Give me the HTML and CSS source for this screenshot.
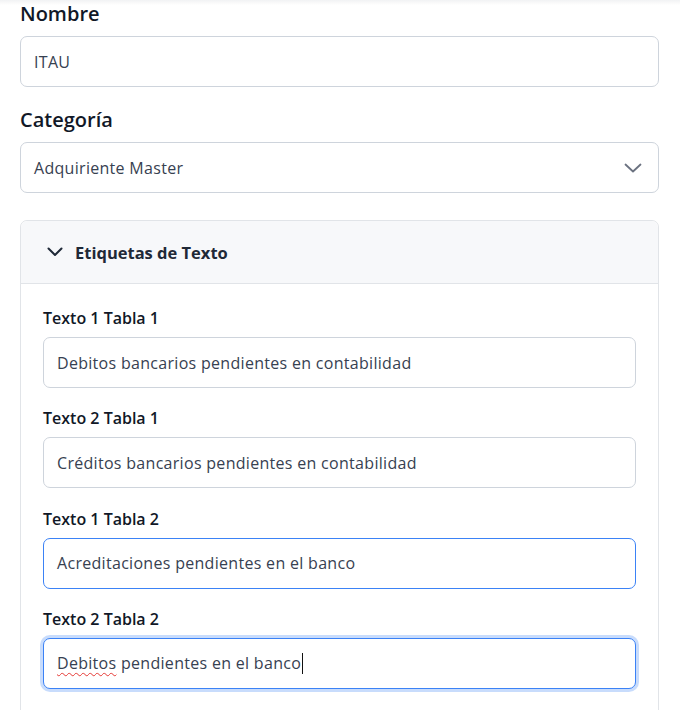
FILE: index.html
```html
<!DOCTYPE html>
<html lang="es">
<head>
<meta charset="utf-8">
<title>Formulario</title>
<link rel="stylesheet" href="styles.css">
</head>
<body>
<div class="page">
  <div class="field">
    <label class="label-lg">Nombre</label>
    <div class="control">ITAU</div>
  </div>
  <div class="field">
    <label class="label-lg">Categoría</label>
    <div class="control select">
      <span>Adquiriente Master</span>
      <svg class="select-chev" width="18" height="10" viewBox="0 0 18 10"><path d="M1.5 1.5 L9 8.5 L16.5 1.5" fill="none" stroke="#6b7280" stroke-width="1.8" stroke-linecap="round" stroke-linejoin="round"/></svg>
    </div>
  </div>
  <div class="card">
    <div class="card-head">
      <svg class="head-chev" width="16" height="10" viewBox="0 0 16 10"><path d="M1.5 1.5 L8 8 L14.5 1.5" fill="none" stroke="#1f2937" stroke-width="2" stroke-linecap="round" stroke-linejoin="round"/></svg>
      <span class="card-title">Etiquetas de Texto</span>
    </div>
    <div class="card-body">
      <div class="sub-field">
        <label class="label-sm">Texto 1 Tabla 1</label>
        <div class="control">Debitos bancarios pendientes en contabilidad</div>
      </div>
      <div class="sub-field">
        <label class="label-sm">Texto 2 Tabla 1</label>
        <div class="control">Créditos bancarios pendientes en contabilidad</div>
      </div>
      <div class="sub-field">
        <label class="label-sm">Texto 1 Tabla 2</label>
        <div class="control active">Acreditaciones pendientes en el banco</div>
      </div>
      <div class="sub-field">
        <label class="label-sm">Texto 2 Tabla 2</label>
        <div class="control focused"><span class="misspelled">Debitos</span>&nbsp;pendientes en el banco<span class="caret"></span></div>
      </div>
    </div>
  </div>
</div>
</body>
</html>
```
FILE: styles.css
```css
html, body {
  margin: 0;
  padding: 0;
}
body {
  background: linear-gradient(#f1f2f4 0, #fafafa 3px, #ffffff 5px) no-repeat;
  background-color: #fff;
  font-family: "Open Sans", "Noto Sans", sans-serif;
  color: #111827;
  width: 680px;
  height: 710px;
  overflow: hidden;
}
.page {
  padding: 0 21px 0 20px;
}
.field {
  margin-bottom: 19px;
}
.label-lg {
  display: block;
  font-size: 20px;
  font-weight: 600;
  line-height: 28px;
  height: 28px;
  margin-bottom: 8px;
  color: #111827;
}
.control {
  box-sizing: border-box;
  height: 51px;
  border: 1px solid #ced4dc;
  border-radius: 7px;
  padding: 0 13px;
  display: flex;
  align-items: center;
  font-size: 16px;
  letter-spacing: 0.3px;
  color: #374151;
  background: #fff;
  white-space: nowrap;
}
.select {
  justify-content: space-between;
  padding-right: 16px;
}
.select-chev {
  display: block;
}
.card {
  margin-top: 27px;
  border: 1px solid #e1e4e8;
  border-radius: 7px;
  height: 600px;
}
.card-head {
  background: #f7f8fa;
  border-bottom: 1px solid #e1e4e8;
  border-radius: 7px 7px 0 0;
  display: flex;
  align-items: center;
  padding-left: 26px;
  box-sizing: border-box;
  height: 63px;
}
.head-chev {
  display: block;
  margin-right: 12px;
}
.card-title {
  font-size: 16.5px;
  font-weight: 700;
  color: #1f2937;
}
.card-body {
  padding: 22px 22px 0 22px;
}
.sub-field {
  margin-bottom: 18.33px;
}
.label-sm {
  display: block;
  font-size: 16px;
  font-weight: 600;
  line-height: 24px;
  margin-bottom: 7px;
  color: #111827;
}
.active {
  border-color: #3b82f6;
}
.focused {
  border-color: #3b82f6;
  box-shadow: 0 0 0 3px rgba(59, 130, 246, 0.28);
}
.misspelled {
  text-decoration: underline wavy #e53935;
  text-decoration-thickness: 1px;
  text-underline-offset: 3px;
}
.caret {
  display: inline-block;
  width: 1px;
  height: 21px;
  background: #111;
  margin-left: 1px;
}
```
